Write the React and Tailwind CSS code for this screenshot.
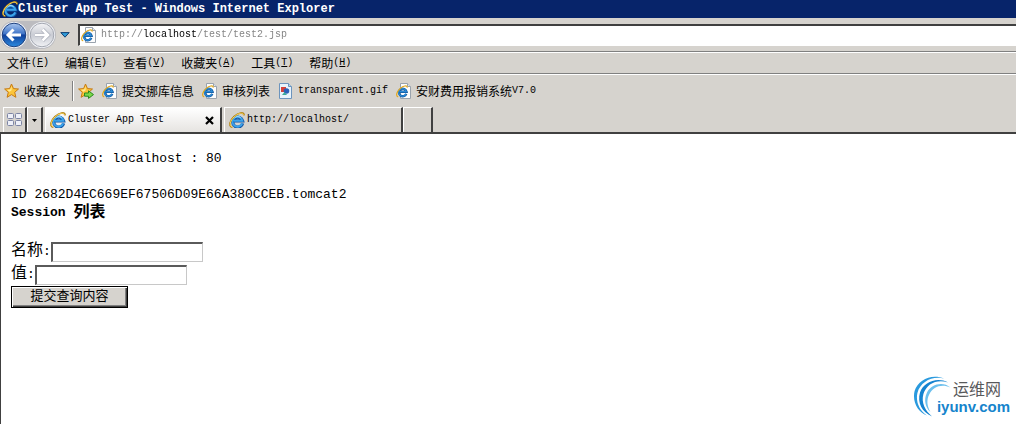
import React, { useState } from 'react';

const menus = [
    { label: '文件', accessKey: 'F' },
    { label: '编辑', accessKey: 'E' },
    { label: '查看', accessKey: 'V' },
    { label: '收藏夹', accessKey: 'A' },
    { label: '工具', accessKey: 'T' },
    { label: '帮助', accessKey: 'H' },
];

// --- Icons ---
function IeLogo({ className }) {
    return (
        <svg viewBox="0 0 16 16" className={className} fill="none" aria-hidden="true">
            <path d="M13.6 11.4A5 5 0 1 1 13.6 8.9H4.6" stroke="#1256a6" strokeWidth="3.2" />
            <path d="M13.2 11.3A5 5 0 1 1 13.4 8.8H4.8" stroke="#3ba3ea" strokeWidth="2" />
            <path d="M4.8 6.6A4.6 4.6 0 0 1 11.6 5.6" stroke="#a5defc" strokeWidth="1" />
            <path d="M3.4 15.2C-.6 14.6.4 8.8 5 4.6S14.6-.6 15.2 3.4" stroke="#a97c14" strokeWidth="1.6" />
            <path d="M3.2 14.9C-.2 14.2.8 8.8 5.2 4.8S14.4 0 14.9 3.2" stroke="#fbd75c" strokeWidth="1" />
        </svg>
    );
}

function PageIcon({ className }) {
    return (
        <svg viewBox="0 0 16 16" className={className} fill="none" aria-hidden="true">
            <path d="M4.5.5h7l3 3v12h-10z" fill="#fdfdfd" stroke="#9aa3ad" />
            <path d="M11.5.5v3h3" fill="#dfe5ea" stroke="#9aa3ad" />
            <path d="M10.3 10.9A3.8 3.8 0 1 1 10.5 8.7H3.6" stroke="#12589f" strokeWidth="2.4" />
            <path d="M10 10.8A3.8 3.8 0 1 1 10.2 8.6H3.8" stroke="#2b8bd6" strokeWidth="1.3" />
            <path d="M2.2 13.9C-.6 13.2.6 8.6 4 5.6S11 2 11.4 4.6" stroke="#e3a91e" strokeWidth="1.2" />
        </svg>
    );
}

function GifIcon({ className }) {
    return (
        <svg viewBox="0 0 16 16" className={className} fill="none" aria-hidden="true">
            <path d="M1.5.5h9l3 3v12h-12z" fill="#e8f3fc" stroke="#6c94bd" />
            <path d="M10.5.5v3h3" fill="#b6d3ec" stroke="#6c94bd" />
            <rect x="3" y="4" width="5" height="5" fill="#d6413a" />
            <circle cx="8.5" cy="8" r="2.8" fill="#2b5fb8" />
            <path d="M4 12l2.5-3 2.5 3z" fill="#3aa99a" />
        </svg>
    );
}

function StarIcon({ className, withArrow }) {
    return (
        <svg viewBox="0 0 16 16" className={className} aria-hidden="true">
            <path
                d="M7.5 1l2 4.6 5 .4-3.8 3.3 1.2 5-4.4-2.7-4.4 2.7 1.2-5L.6 6l5-.4z"
                fill="#fcc53a"
                stroke="#c77a13"
                strokeLinejoin="round"
            />
            <path d="M7.5 3L6.3 6.4 3 6.8l2.6 2 2-1.6z" fill="#ffeb9b" />
            {withArrow && (
                <path d="M6.5 10h4V7.8l5 3.8-5 3.8v-2.2h-4z" fill="#7bd94b" stroke="#2b8a1d" strokeLinejoin="round" />
            )}
        </svg>
    );
}

function NavButtons() {
    return (
        <div className="flex rounded-full bg-[#bcbcc0]">
            <button type="button" aria-label="后退" className="size-7">
                <svg viewBox="0 0 28 28" className="size-7">
                    <defs>
                        <linearGradient id="back" x1="0" y1="0" x2="0" y2="1">
                            <stop offset="0" stopColor="#a9c6ee" />
                            <stop offset=".45" stopColor="#3f74c8" />
                            <stop offset=".5" stopColor="#0f3f9b" />
                            <stop offset="1" stopColor="#2c8be0" />
                        </linearGradient>
                    </defs>
                    <circle cx="14" cy="14" r="13" fill="#f4f6fa" />
                    <circle cx="14" cy="14" r="11.8" fill="url(#back)" stroke="#1c3f7e" />
                    <path d="M13.5 8.5L8 14l5.5 5.5M8.5 14H21" fill="none" stroke="#fff" strokeWidth="3" />
                </svg>
            </button>
            <button type="button" aria-label="前进" className="size-7">
                <svg viewBox="0 0 28 28" className="size-7">
                    <defs>
                        <linearGradient id="forward" x1="0" y1="0" x2="0" y2="1">
                            <stop offset="0" stopColor="#f4f4f6" />
                            <stop offset=".5" stopColor="#c9ccd4" />
                            <stop offset="1" stopColor="#f1f2f5" />
                        </linearGradient>
                    </defs>
                    <circle cx="14" cy="14" r="13" fill="#f4f6fa" />
                    <circle cx="14" cy="14" r="11.8" fill="url(#forward)" stroke="#a2a6b0" />
                    <path d="M14.5 8.5L20 14l-5.5 5.5M19.5 14H7" fill="none" stroke="#a9adb8" strokeWidth="4" />
                    <path d="M14.5 8.5L20 14l-5.5 5.5M19.5 14H7" fill="none" stroke="#fff" strokeWidth="2.6" />
                </svg>
            </button>
        </div>
    );
}

// --- Browser chrome ---
function AddressBar() {
    const [url, setUrl] = useState('http://localhost/test/test2.jsp');

    return (
        <div className="flex h-[34px] items-center border-b border-[#808080]">
            <NavButtons />
            <button type="button" aria-label="最近的页面" className="mr-1 p-1">
                <svg viewBox="0 0 10 6" className="h-[6px] w-[10px]">
                    <path d="M.8.6h8.4L5 5.2z" fill="#2f9bd8" stroke="#123f73" />
                </svg>
            </button>
            <div className="flex h-[22px] flex-1 items-center gap-1 border-t-2 border-b border-l-2 border-t-[#404040] border-b-white border-l-[#404040] bg-white pl-px">
                <PageIcon className="size-4" />
                {/* host part is black, the rest is grey */}
                <input
                    type="text"
                    aria-label="地址"
                    value={url}
                    onChange={(e) => setUrl(e.target.value)}
                    className="flex-1 bg-[linear-gradient(to_right,#808080_42px,#000_42px,#000_96px,#808080_96px)] bg-clip-text font-['Liberation_Mono',monospace] text-[10px] text-transparent caret-black outline-none"
                />
            </div>
        </div>
    );
}

function MenuBar() {
    return (
        <nav className="flex h-[22px] items-center gap-4 border-t border-b border-t-white border-b-[#808080] pl-[7px]">
            {menus.map((menu) => (
                <button key={menu.label} type="button" className="flex items-center">
                    {menu.label}
                    <span className="font-['Liberation_Mono',monospace] text-[10px]">
                        (<u>{menu.accessKey}</u>)
                    </span>
                </button>
            ))}
        </nav>
    );
}

function FavoritesBar() {
    return (
        <div className="flex h-[33px] items-center gap-2 border-t border-white pl-1">
            <button type="button" className="flex items-center gap-1">
                <StarIcon className="size-4" />
                收藏夹
            </button>
            <div className="ml-1 h-5 w-[2px] border-r border-l border-r-white border-l-[#808080]" />
            <div className="-ml-1 flex items-center gap-2">
                <button type="button" aria-label="添加到收藏夹栏">
                    <StarIcon className="size-4" withArrow />
                </button>
                <a href="#" className="flex items-center gap-1">
                    <PageIcon className="size-4" />
                    提交挪库信息
                </a>
                <a href="#" className="flex items-center gap-1">
                    <PageIcon className="size-4" />
                    审核列表
                </a>
                <a href="#" className="flex items-center gap-1">
                    <GifIcon className="size-4" />
                    <span className="font-['Liberation_Mono',monospace] text-[10px]">transparent.gif</span>
                </a>
                <a href="#" className="flex items-center gap-1">
                    <PageIcon className="size-4" />
                    <span className="flex items-center">
                        安财费用报销系统
                        <span className="font-['Liberation_Mono',monospace] text-[10px]">V7.0</span>
                    </span>
                </a>
            </div>
        </div>
    );
}

function TabBar() {
    const raised = 'border-t border-l border-r-2 border-t-white border-l-white border-r-[#404040]';

    return (
        <div className="flex h-[27px] items-stretch border-b-2 border-[#404040] pl-[3px] font-['Liberation_Mono',monospace] text-[10px]">
            <button type="button" aria-label="快速导航选项卡" className={`flex w-6 items-center justify-center ${raised}`}>
                <svg viewBox="0 0 16 14" className="h-[14px] w-4" fill="#eef0f8" stroke="#7c84a4">
                    <rect x=".5" y=".5" width="6" height="5" rx="1" />
                    <rect x="8.5" y=".5" width="6" height="5" rx="1" />
                    <rect x=".5" y="7.5" width="6" height="5" rx="1" />
                    <rect x="8.5" y="7.5" width="6" height="5" rx="1" />
                </svg>
            </button>
            <button type="button" aria-label="选项卡列表" className={`mr-[2px] flex w-4 items-center justify-center ${raised}`}>
                <svg viewBox="0 0 5 3" className="h-[3px] w-[5px]">
                    <path d="M0 0h5L2.5 3z" />
                </svg>
            </button>
            <div className={`mr-[2px] flex w-[177px] items-center bg-linear-to-b from-white to-[#e6e4e1] pr-1 pl-1 ${raised}`}>
                <button type="button" className="flex flex-1 items-center gap-[2px]">
                    <IeLogo className="size-4" />
                    Cluster App Test
                </button>
                <button type="button" aria-label="关闭选项卡" className="p-[2px]">
                    <svg viewBox="0 0 9 9" className="size-[9px]" stroke="#000" strokeWidth="2.2">
                        <path d="M1 1l7 7M8 1L1 8" />
                    </svg>
                </button>
            </div>
            <button type="button" className={`flex w-[179px] items-center gap-[2px] pl-1 ${raised}`}>
                <IeLogo className="size-4" />
                http://localhost/
            </button>
            <button type="button" aria-label="新选项卡" className={`w-[30px] ${raised}`} />
        </div>
    );
}

// --- Page shown in the active tab ---
function SessionPage() {
    const [name, setName] = useState('');
    const [value, setValue] = useState('');
    const field =
        'h-5 w-[152px] border-t-2 border-r border-b border-l-2 border-t-[#5a5a5a] border-r-[#c8c8c8] border-b-[#c8c8c8] border-l-[#5a5a5a] bg-white px-1 text-[13px] outline-none';

    return (
        <main className="relative flex-1 border-l border-[#404040] bg-white px-[10px] pt-4 pb-4 font-['Liberation_Mono','Noto_Sans_CJK_SC',monospace] text-[13px] leading-[18px]">
            <p>Server Info: localhost : 80</p>
            <p className="mt-[18px] break-all">ID 2682D4EC669EF67506D09E66A380CCEB.tomcat2</p>
            <h3 className="flex items-center font-bold">
                <span className="whitespace-pre">Session </span>
                <span className="text-base leading-[18px]">列表</span>
            </h3>
            <form className="mt-[18px]" onSubmit={(e) => e.preventDefault()}>
                <div className="flex h-[23px] items-center">
                    <label htmlFor="name" className="text-base leading-[18px]">
                        名称<span className="text-[13px]">:</span>
                    </label>
                    <input id="name" type="text" value={name} onChange={(e) => setName(e.target.value)} className={field} />
                </div>
                <div className="flex h-[23px] items-center">
                    <label htmlFor="value" className="text-base leading-[18px]">
                        值<span className="text-[13px]">:</span>
                    </label>
                    <input id="value" type="text" value={value} onChange={(e) => setValue(e.target.value)} className={field} />
                </div>
                <button
                    type="submit"
                    className="flex h-[22px] w-[117px] items-center justify-center border border-black bg-[#d6d3ce] text-[13px] shadow-[inset_1px_1px_0_#fff,inset_-1px_-1px_0_#404040,inset_-2px_-2px_0_#808080]"
                >
                    提交查询内容
                </button>
            </form>
            <Watermark />
        </main>
    );
}

function Watermark() {
    return (
        <div className="absolute right-[6px] bottom-[6px] flex font-['Liberation_Sans','Noto_Sans_CJK_SC',sans-serif]">
            <svg viewBox="0 0 40 42" className="-mr-4 h-[42px] w-10" aria-hidden="true">
                <path d="M31 2.6C19-2.6 5 3.6 1.6 15C-1 26 5 36 14 39.6C6 34 2.6 26 4.4 17C7.4 6 19-.4 31 2.6z" fill="#2a9ade" />
                <path d="M35 6.4C24 .4 10.6 6 7 16.4C4 26.600 9 36 19 40.400C12 34.600 8 26.400 10.400 18C13.600 7.600 24 2.800 35 6.400z" fill="#1583d0" />
                <path d="M37.400 11.400C29.400 4.800 18 8.400 14 16.400C10.400 24 12.400 31 17.400 36C14 30 13.400 24 16.200 18.400C20 10.600 28.600 7.600 37.400 11.400z" fill="#6cc0ee" />
            </svg>
            <div className="pt-[5px]">
                <p className="pl-4 text-base leading-[18px] text-[#58595b]">运维网</p>
                <p className="text-[15px] leading-4 font-bold text-[#1584cc]">iyunv.com</p>
            </div>
        </div>
    );
}

export default function App() {
    return (
        <div className="flex min-h-screen flex-col bg-[#d6d3ce] font-['Noto_Sans_CJK_SC',sans-serif] text-xs leading-4 text-black">
            <header className="flex h-[18px] items-center bg-[#07246a] pl-[2px] text-white">
                <IeLogo className="size-4" />
                <h1 className="truncate font-['Liberation_Mono',monospace] text-xs font-bold">
                    Cluster App Test - Windows Internet Explorer
                </h1>
            </header>
            <AddressBar />
            <MenuBar />
            <FavoritesBar />
            <TabBar />
            <SessionPage />
        </div>
    );
}
